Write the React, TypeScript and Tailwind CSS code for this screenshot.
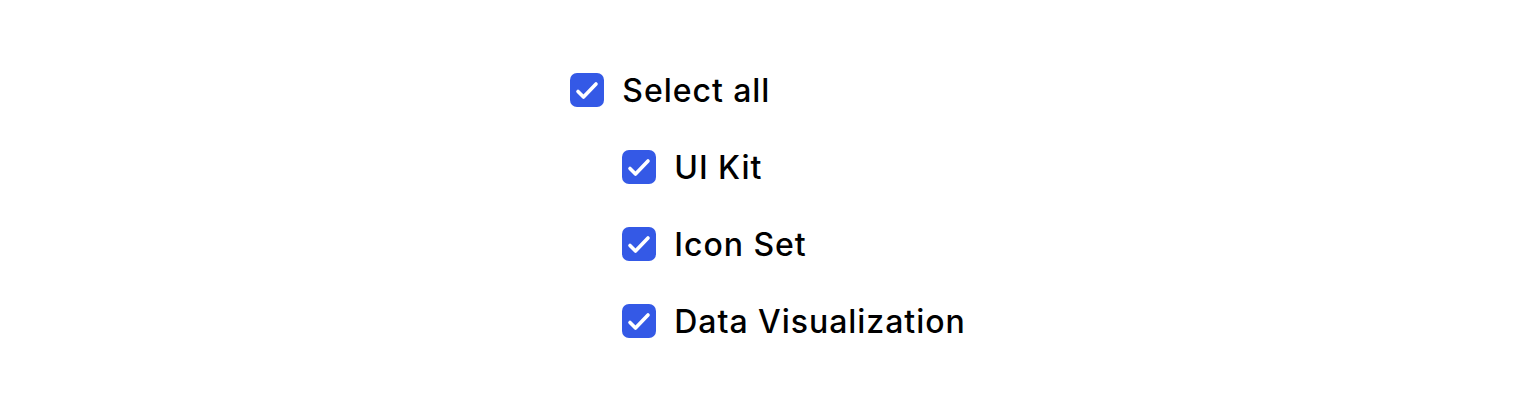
import React, { useState } from 'react';

const items = ['UI Kit', 'Icon Set', 'Data Visualization'];

function Box({ checked, onClick }: { checked: boolean; onClick: () => void }) {
  return (
    <button
      onClick={onClick}
      className={`w-[34px] h-[34px] rounded-[7px] flex items-center justify-center shrink-0 ${
        checked ? 'bg-[#3459e6]' : 'bg-white border-2 border-gray-300'
      }`}
    >
      {checked && (
        <svg width="34" height="34" viewBox="0 0 34 34" fill="none">
          <path d="M8 18.5l5.5 5.5L26 11" stroke="white" strokeWidth="3.6" strokeLinecap="round" strokeLinejoin="round" />
        </svg>
      )}
    </button>
  );
}

export default function App() {
  const [checked, setChecked] = useState<boolean[]>([true, true, true]);
  const all = checked.every(Boolean);

  return (
    <div className="w-full h-[411px] bg-white flex items-center justify-center" style={{ fontFamily: 'Inter, sans-serif' }}>
      <div className="flex flex-col gap-[43px] text-[32px] leading-[34px] text-black font-medium tracking-[0.03em]">
        <div className="flex items-center gap-[18px]">
          <Box checked={all} onClick={() => setChecked(checked.map(() => !all))} />
          <span className="leading-[36px] -mb-[2px]">Select all</span>
        </div>
        {items.map((label, i) => (
          <div key={label} className="flex items-center gap-[18px] pl-[52px]">
            <Box checked={checked[i]} onClick={() => setChecked(checked.map((c, j) => (j === i ? !c : c)))} />
            <span className="leading-[36px] -mb-[2px]">{label}</span>
          </div>
        ))}
      </div>
    </div>
  );
}
